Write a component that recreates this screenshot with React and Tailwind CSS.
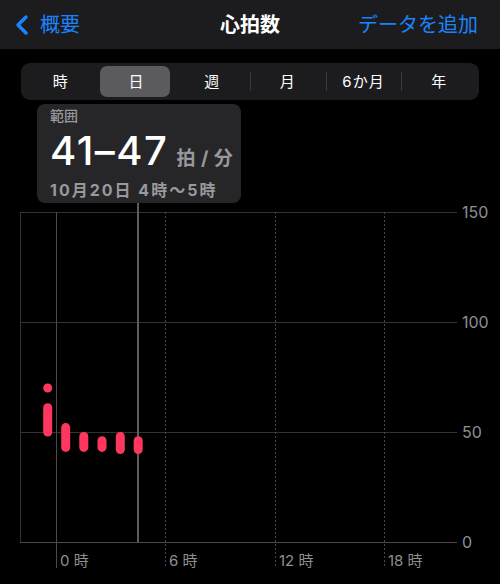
import { ChevronLeft } from 'lucide-react';

const FONT = { fontFamily: "Inter, 'Noto Sans CJK JP', sans-serif" };

const segments = ['時', '日', '週', '月', '6か月', '年'];

// chart geometry: svg starts at page y=100
const Y0 = 442; // value 0
const PX = 2.2; // px per bpm
const y = (v) => Y0 - v * PX;

const bars = [
  { x: 47.7, lo: 70, hi: 70 },
  { x: 47.7, lo: 50, hi: 61 },
  { x: 65.7, lo: 43, hi: 52 },
  { x: 83.8, lo: 43, hi: 48 },
  { x: 102, lo: 43, hi: 46 },
  { x: 120.3, lo: 42, hi: 48 },
  { x: 138.2, lo: 42, hi: 46 },
];

function Chart() {
  const grid = '#333335';
  return (
    <svg width="500" height="484" className="block">
      {/* horizontal grid */}
      {[150, 100, 50, 0].map((v) => (
        <line key={v} x1="20" x2="457" y1={y(v) + 0.5} y2={y(v) + 0.5} stroke={v === 0 ? '#4a4a4c' : grid} strokeWidth="1" />
      ))}
      <line x1="20.5" x2="20.5" y1={y(150)} y2={y(0)} stroke={grid} strokeWidth="1" />
      {/* 0時 solid */}
      <line x1="56.5" x2="56.5" y1={y(150)} y2="468" stroke="#4a4a4c" strokeWidth="1" />
      {/* dotted hours */}
      {[165.5, 275.5, 384.5].map((x) => (
        <line key={x} x1={x} x2={x} y1={y(150)} y2="468" stroke="#4a4a4c" strokeWidth="1" strokeDasharray="2 2" />
      ))}
      {/* selection line */}
      <line x1="138" x2="138" y1="103" y2={y(0)} stroke="#5c5c5f" strokeWidth="2" />
      {/* bars */}
      {bars.map((b, i) => (
        <line
          key={i}
          x1={b.x}
          x2={b.x}
          y1={y(b.hi)}
          y2={y(b.lo)}
          stroke="#ff375f"
          strokeWidth="9"
          strokeLinecap="round"
        />
      ))}
      {/* y labels */}
      {[150, 100, 50, 0].map((v) => (
        <text key={v} x="462" y={y(v) + 6} fill="#8e8e93" fontSize="16" style={FONT}>
          {v}
        </text>
      ))}
      {/* x labels */}
      {[
        [60, '0 時'],
        [169, '6 時'],
        [279, '12 時'],
        [388, '18 時'],
      ].map(([x, t]) => (
        <text key={t} x={x} y="466" fill="#8e8e93" fontSize="15" style={FONT}>
          {t}
        </text>
      ))}
    </svg>
  );
}

export default function App() {
  return (
    <div className="w-[500px] h-[584px] bg-black overflow-hidden" style={FONT}>
      {/* Header */}
      <div className="h-[49px] bg-[#1c1c1e] flex items-center justify-between pl-[6px] pr-2 relative">
        <div className="flex items-center text-[#1a84ff]">
          <ChevronLeft className="w-[32px] h-[32px]" strokeWidth={2.6} />
          <span className="text-[20px] ml-[2px] leading-none">概要</span>
        </div>
        <span className="absolute left-1/2 -translate-x-1/2 text-white text-[20px] font-bold leading-none">心拍数</span>
        <span className="text-[#1a84ff] text-[20px] leading-none pr-[14px]">データを追加</span>
      </div>

      {/* Segmented control */}
      <div className="mt-[14px] mx-[21px] h-[37px] rounded-[9px] bg-[#1c1c1e] flex items-center px-[2px]">
        {segments.map((s, i) => (
          <div key={s} className="flex-1 h-full flex items-center justify-center relative">
            {i === 1 && <div className="absolute inset-y-[3px] left-[1px] right-[4px] rounded-[7px] bg-[#5b5b5f]" />}
            {i >= 3 && <div className="absolute left-0 top-[9px] bottom-[9px] w-px bg-[#3a3a3c]" />}
            <span className="relative text-white text-[15px] leading-none tracking-[1px]">{s}</span>
          </div>
        ))}
      </div>

      {/* Chart area */}
      <div className="relative">
        <Chart />
        <div className="absolute left-[37px] top-[4px] w-[204px] h-[99px] rounded-[8px] bg-[#262628] pl-[13px] pt-[3px]">
          <div className="text-[#98989d] text-[14px] font-medium leading-[18px]">範囲</div>
          <div className="flex items-baseline mt-[6px]">
            <span className="text-white text-[40px] font-medium leading-[40px] tracking-[1.5px]">41–47</span>
            <span className="text-[#98989d] text-[19px] font-bold ml-[8px] leading-[24px] tracking-[0.5px]">拍 / 分</span>
          </div>
          <div className="text-[#98989d] text-[16px] font-bold leading-[20px] mt-[9px] tracking-[2px]">10月20日 4時〜5時</div>
        </div>
      </div>
    </div>
  );
}
